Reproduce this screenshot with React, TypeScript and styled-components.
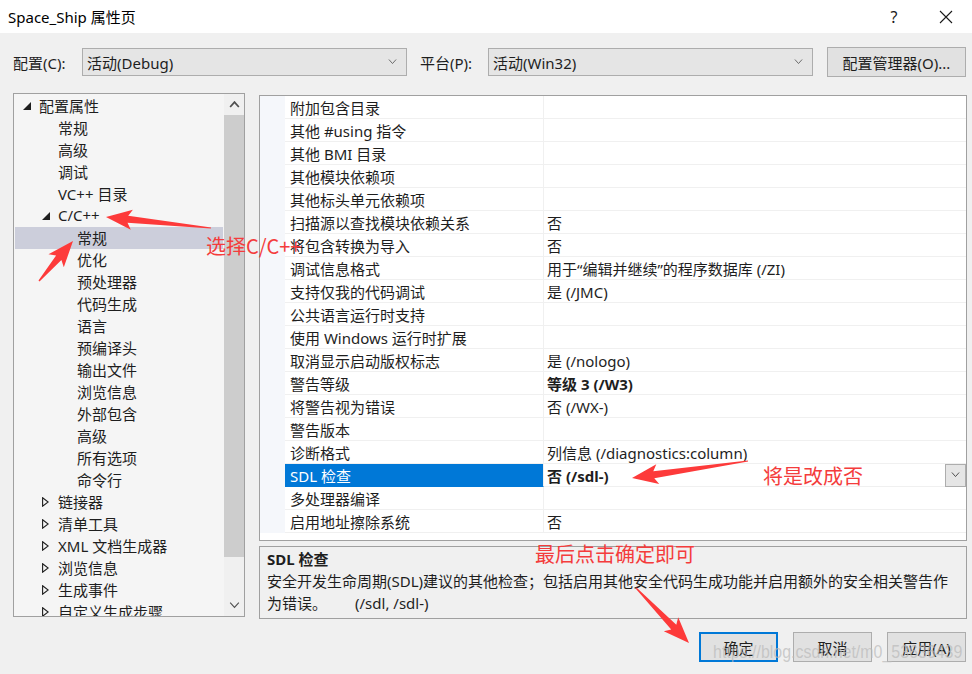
import React from 'react';
import styled, { createGlobalStyle } from 'styled-components';

const GlobalStyle = createGlobalStyle`
  html, body {
    margin: 0;
    padding: 0;
    background: #f0f0f0;
  }
  body {
    font-family: "Noto Sans", "Noto Sans CJK SC", sans-serif;
    font-size: 15px;
    color: #1e1e1e;
  }
`;

type TreeItem = {
    label: string;
    level: number;
    expander?: 'open' | 'closed';
    selected?: boolean;
};

const treeItems: TreeItem[] = [
    { label: '配置属性', level: 0, expander: 'open' },
    { label: '常规', level: 1 },
    { label: '高级', level: 1 },
    { label: '调试', level: 1 },
    { label: 'VC++ 目录', level: 1 },
    { label: 'C/C++', level: 1, expander: 'open' },
    { label: '常规', level: 2, selected: true },
    { label: '优化', level: 2 },
    { label: '预处理器', level: 2 },
    { label: '代码生成', level: 2 },
    { label: '语言', level: 2 },
    { label: '预编译头', level: 2 },
    { label: '输出文件', level: 2 },
    { label: '浏览信息', level: 2 },
    { label: '外部包含', level: 2 },
    { label: '高级', level: 2 },
    { label: '所有选项', level: 2 },
    { label: '命令行', level: 2 },
    { label: '链接器', level: 1, expander: 'closed' },
    { label: '清单工具', level: 1, expander: 'closed' },
    { label: 'XML 文档生成器', level: 1, expander: 'closed' },
    { label: '浏览信息', level: 1, expander: 'closed' },
    { label: '生成事件', level: 1, expander: 'closed' },
    { label: '自定义生成步骤', level: 1, expander: 'closed' },
];

type Prop = { name: string; value: string; bold?: boolean; selected?: boolean };

const props: Prop[] = [
    { name: '附加包含目录', value: '' },
    { name: '其他 #using 指令', value: '' },
    { name: '其他 BMI 目录', value: '' },
    { name: '其他模块依赖项', value: '' },
    { name: '其他标头单元依赖项', value: '' },
    { name: '扫描源以查找模块依赖关系', value: '否' },
    { name: '将包含转换为导入', value: '否' },
    { name: '调试信息格式', value: '用于“编辑并继续”的程序数据库 (/ZI)' },
    { name: '支持仅我的代码调试', value: '是 (/JMC)' },
    { name: '公共语言运行时支持', value: '' },
    { name: '使用 Windows 运行时扩展', value: '' },
    { name: '取消显示启动版权标志', value: '是 (/nologo)' },
    { name: '警告等级', value: '等级 3 (/W3)', bold: true },
    { name: '将警告视为错误', value: '否 (/WX-)' },
    { name: '警告版本', value: '' },
    { name: '诊断格式', value: '列信息 (/diagnostics:column)' },
    { name: 'SDL 检查', value: '否 (/sdl-)', bold: true, selected: true },
    { name: '多处理器编译', value: '' },
    { name: '启用地址擦除系统', value: '否' },
];

// tapered screenshot-tool arrow, from tail to tip
const arrowPoints = (x1: number, y1: number, x2: number, y2: number, headLen = 22, headW = 20, shaftW = 7) => {
    const dx = x2 - x1;
    const dy = y2 - y1;
    const len = Math.hypot(dx, dy);
    const ux = dx / len;
    const uy = dy / len;
    const px = -uy;
    const py = ux;
    const bx = x2 - ux * headLen;
    const by = y2 - uy * headLen;
    const wx = bx - ux * 4;
    const wy = by - uy * 4;
    const pts = [
        [x1 + px * 0.6, y1 + py * 0.6],
        [bx + (px * shaftW) / 2, by + (py * shaftW) / 2],
        [wx + (px * headW) / 2, wy + (py * headW) / 2],
        [x2, y2],
        [wx - (px * headW) / 2, wy - (py * headW) / 2],
        [bx - (px * shaftW) / 2, by - (py * shaftW) / 2],
        [x1 - px * 0.6, y1 - py * 0.6],
    ];
    return pts.map((p) => `${p[0].toFixed(1)},${p[1].toFixed(1)}`).join(' ');
};

const Chevron = ({ up, color = '#606060', w = 9 }: { up?: boolean; color?: string; w?: number }) => (
    <svg width={w} height={w / 2 + 1} viewBox="0 0 10 6">
        <path d={up ? 'M1 5.5 L5 1 L9 5.5' : 'M1 0.5 L5 5 L9 0.5'} fill="none" stroke={color} strokeWidth={up ? 1.6 : 1} />
    </svg>
);

const App = () => {
    return (
        <Window>
            <GlobalStyle />
            <TitleBar>
                <TitleText>Space_Ship 属性页</TitleText>
                <CaptionButton>?</CaptionButton>
                <CaptionButton>
                    <svg width="14" height="14" viewBox="0 0 14 14">
                        <path d="M1 1 L13 13 M13 1 L1 13" stroke="#1a1a1a" strokeWidth="1.1" />
                    </svg>
                </CaptionButton>
            </TitleBar>

            <Content>
                <ConfigRow>
                    <FieldLabel $width={69}>配置(C):</FieldLabel>
                    <Combo>
                        <span>活动(Debug)</span>
                        <Chevron />
                    </Combo>
                    <FieldLabel $width={68} $gap={13}>平台(P):</FieldLabel>
                    <Combo>
                        <span>活动(Win32)</span>
                        <Chevron />
                    </Combo>
                    <ManagerButton>配置管理器(O)...</ManagerButton>
                </ConfigRow>

                <MainArea>
                    <TreePanel>
                        <TreeList>
                            {treeItems.map((item, i) => (
                                <TreeRow key={i} $level={item.level} $selected={item.selected}>
                                    <Expander>
                                        {item.expander === 'open' && (
                                            <svg width="8" height="8" viewBox="0 0 8 8">
                                                <polygon points="8,0 8,8 0,8" fill="#1e1e1e" />
                                            </svg>
                                        )}
                                        {item.expander === 'closed' && (
                                            <svg width="7" height="10" viewBox="0 0 7 10">
                                                <polygon points="0.6,0.8 6.2,5 0.6,9.2" fill="none" stroke="#1e1e1e" strokeWidth="1.1" />
                                            </svg>
                                        )}
                                    </Expander>
                                    <TreeLabel>{item.label}</TreeLabel>
                                </TreeRow>
                            ))}
                        </TreeList>
                        <ScrollBar>
                            <ScrollArrow>
                                <Chevron up color="#505050" w={11} />
                            </ScrollArrow>
                            <ScrollThumb />
                            <ScrollTrack />
                            <ScrollArrow>
                                <Chevron color="#505050" w={11} />
                            </ScrollArrow>
                        </ScrollBar>
                    </TreePanel>

                    <RightColumn>
                        <Grid>
                            {props.map((p, i) => (
                                <GridRow key={i}>
                                    <MarginCell />
                                    <NameCell $selected={p.selected}>{p.name}</NameCell>
                                    <ValueCell $bold={p.bold}>
                                        <span>{p.value}</span>
                                        {p.selected && (
                                            <DropButton>
                                                <Chevron color="#404040" />
                                            </DropButton>
                                        )}
                                    </ValueCell>
                                </GridRow>
                            ))}
                        </Grid>
                        <Description>
                            <DescTitle>SDL 检查</DescTitle>
                            <DescText>
                                安全开发生命周期(SDL)建议的其他检查；包括启用其他安全代码生成功能并启用额外的安全相关警告作
                                <br />
                                为错误。<DescSwitch>(/sdl, /sdl-)</DescSwitch>
                            </DescText>
                        </Description>
                    </RightColumn>
                </MainArea>

                <ButtonRow>
                    <DialogButton $default>确定</DialogButton>
                    <DialogButton>取消</DialogButton>
                    <DialogButton>应用(A)</DialogButton>
                </ButtonRow>
            </Content>

            <Annotations>
                <svg width="972" height="674" viewBox="0 0 972 674">
                    <polygon points={arrowPoints(211, 228, 106, 217)} fill="#fd3a3a" />
                    <polygon points={arrowPoints(39, 281, 73, 241)} fill="#fd3a3a" />
                    <polygon points={arrowPoints(748, 461, 632, 478)} fill="#fd3a3a" />
                    <polygon points={arrowPoints(636, 588, 689, 643)} fill="#fd3a3a" />
                </svg>
                <RedNote $x={206} $y={232}>选择C/C++</RedNote>
                <RedNote $x={763} $y={462}>将是改成否</RedNote>
                <RedNote $x={535} $y={540}>最后点击确定即可</RedNote>
                <Watermark>https://blog.csdn.net/m0_53636439</Watermark>
            </Annotations>
        </Window>
    );
};

export default App;

const Window = styled.div`
    position: relative;
    width: 972px;
    height: 674px;
    overflow: hidden;
    display: flex;
    flex-direction: column;
    background: #f0f0f0;
`;

const TitleBar = styled.div`
    height: 33px;
    flex-shrink: 0;
    display: flex;
    align-items: center;
    padding-left: 8px;
    background: #ffffff;
    color: #000000;
    font-size: 15px;
`;

const TitleText = styled.div`
    flex: 1;
`;

const CaptionButton = styled.div`
    width: 52px;
    height: 33px;
    display: flex;
    align-items: center;
    justify-content: center;
    font-size: 16px;
    color: #1a1a1a;
`;

const Content = styled.div`
    flex: 1;
    display: flex;
    flex-direction: column;
    padding: 14px 5px 0 13px;
`;

const ConfigRow = styled.div`
    height: 30px;
    display: flex;
    align-items: center;
`;

const FieldLabel = styled.div<{ $width: number; $gap?: number }>`
    width: ${(p) => p.$width}px;
    margin-left: ${(p) => p.$gap ?? 0}px;
    flex-shrink: 0;
    white-space: nowrap;
`;

const Combo = styled.div`
    box-sizing: border-box;
    width: 325px;
    height: 28px;
    display: flex;
    align-items: center;
    justify-content: space-between;
    padding: 0 9px 0 4px;
    background: #e5e5e5;
    border: 1px solid #adadad;
`;

const ManagerButton = styled.div`
    box-sizing: border-box;
    width: 139px;
    height: 30px;
    margin-left: 14px;
    display: flex;
    align-items: center;
    justify-content: center;
    background: #e1e1e1;
    border: 1px solid #adadad;
`;

const MainArea = styled.div`
    height: 526px;
    margin-top: 16px;
    display: flex;
    gap: 14px;
`;

const TreePanel = styled.div`
    box-sizing: border-box;
    width: 232px;
    height: 524px;
    display: flex;
    background: #f5f5f5;
    border: 1px solid #a0a0a0;
`;

const TreeList = styled.div`
    flex: 1;
    overflow: hidden;
    padding: 1px 1px 0 1px;
`;

const TreeRow = styled.div<{ $level: number; $selected?: boolean }>`
    height: 22px;
    display: flex;
    align-items: center;
    padding-left: ${(p) => 8 + p.$level * 19}px;
    white-space: nowrap;
    background: ${(p) => (p.$selected ? '#cccedb' : 'transparent')};
`;

const TreeLabel = styled.span`
    position: relative;
    top: -1px;
`;

const Expander = styled.span`
    width: 16px;
    flex-shrink: 0;
    display: flex;
    align-items: center;
`;

const ScrollBar = styled.div`
    width: 20px;
    display: flex;
    flex-direction: column;
    background: #f0f0f0;
`;

const ScrollArrow = styled.div`
    height: 21px;
    display: flex;
    align-items: center;
    justify-content: center;
`;

const ScrollThumb = styled.div`
    height: 442px;
    background: #cdcdcd;
`;

const ScrollTrack = styled.div`
    flex: 1;
`;

const RightColumn = styled.div`
    flex: 1;
    display: flex;
    flex-direction: column;
    gap: 5px;
    padding-top: 2px;
`;

const Grid = styled.div`
    box-sizing: border-box;
    height: 446px;
    background: #ffffff;
    border: 1px solid #a0a0a0;
`;

const GridRow = styled.div`
    height: 23px;
    display: flex;
`;

const MarginCell = styled.div`
    width: 25px;
    flex-shrink: 0;
    background: #f5f7fb;
`;

const NameCell = styled.div<{ $selected?: boolean }>`
    box-sizing: border-box;
    width: 259px;
    flex-shrink: 0;
    display: flex;
    align-items: center;
    padding-left: 5px;
    white-space: nowrap;
    background: ${(p) => (p.$selected ? '#0078d7' : '#ffffff')};
    color: ${(p) => (p.$selected ? '#ffffff' : '#1e1e1e')};
    border-right: 1px solid #f0f0f0;
    border-bottom: 1px solid ${(p) => (p.$selected ? '#0078d7' : '#f0f0f0')};
`;

const ValueCell = styled.div<{ $bold?: boolean }>`
    box-sizing: border-box;
    flex: 1;
    display: flex;
    align-items: center;
    justify-content: space-between;
    padding-left: 3px;
    white-space: nowrap;
    font-weight: ${(p) => (p.$bold ? 700 : 400)};
    border-bottom: 1px solid #f0f0f0;
`;

const DropButton = styled.div`
    box-sizing: border-box;
    width: 21px;
    height: 23px;
    display: flex;
    align-items: center;
    justify-content: center;
    background: #e5e5e5;
    border: 1px solid #adadad;
`;

const Description = styled.div`
    box-sizing: border-box;
    height: 73px;
    padding: 1px 7px;
    background: #f0f0f0;
    border: 1px solid #a0a0a0;
    line-height: 22px;
`;

const DescTitle = styled.div`
    font-weight: 700;
`;

const DescText = styled.div`
    white-space: nowrap;
`;

const DescSwitch = styled.span`
    margin-left: 28px;
`;

const ButtonRow = styled.div`
    margin-top: 13px;
    display: flex;
    justify-content: flex-end;
    gap: 15px;
    padding-right: 1px;
`;

const DialogButton = styled.div<{ $default?: boolean }>`
    box-sizing: border-box;
    width: 79px;
    height: 30px;
    display: flex;
    align-items: center;
    justify-content: center;
    background: #e1e1e1;
    border: ${(p) => (p.$default ? '2px solid #0078d7' : '1px solid #adadad')};
`;

const Annotations = styled.div`
    position: absolute;
    inset: 0;
    pointer-events: none;
`;

const RedNote = styled.div<{ $x: number; $y: number }>`
    position: absolute;
    left: ${(p) => p.$x}px;
    top: ${(p) => p.$y}px;
    font-family: "Noto Sans CJK SC", sans-serif;
    font-size: 20px;
    line-height: 28px;
    color: #f43c3c;
    white-space: nowrap;
`;

const Watermark = styled.div`
    position: absolute;
    left: 713px;
    top: 640px;
    font-family: "Liberation Sans", Arial, sans-serif;
    font-size: 19px;
    line-height: 24px;
    color: rgba(185, 185, 185, 0.7);
    white-space: nowrap;
    transform: scaleX(0.84);
    transform-origin: left center;
`;
